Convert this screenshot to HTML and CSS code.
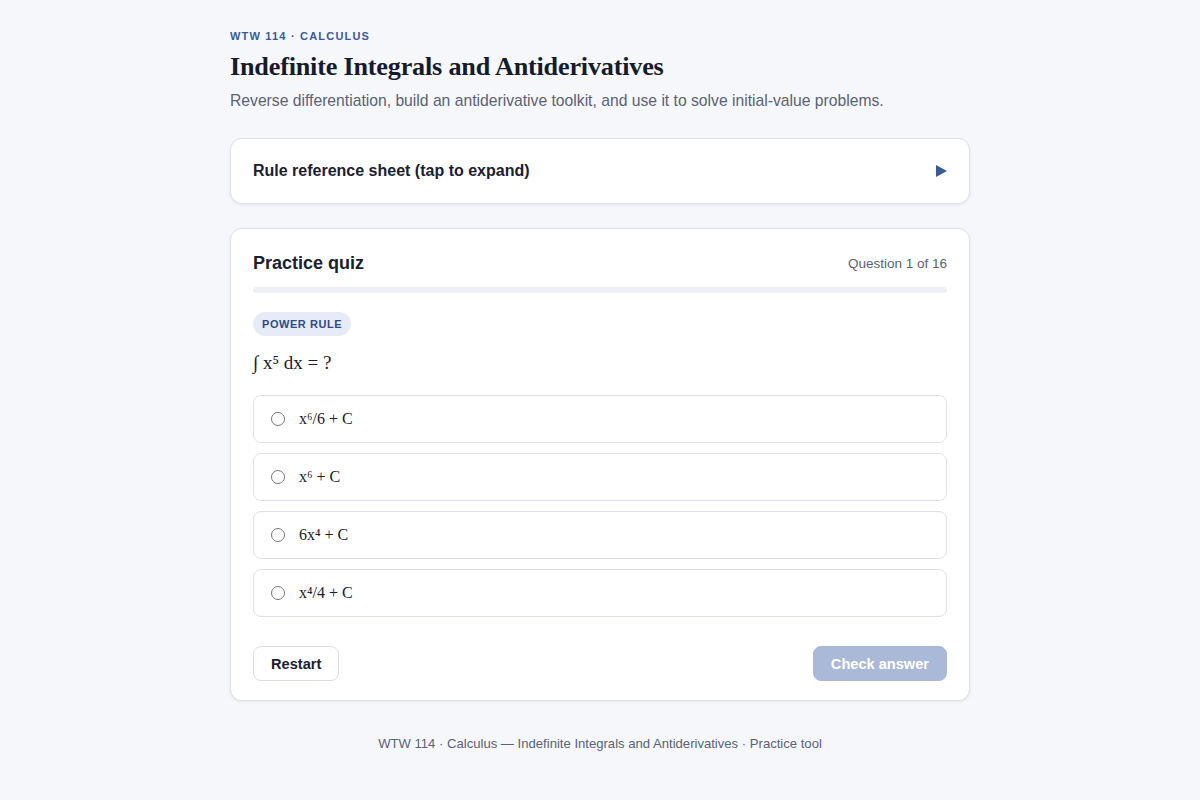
FILE: index.html
```html
<!DOCTYPE html>
<html lang="en">
<head>
<meta charset="utf-8">
<title>Indefinite Integrals and Antiderivatives</title>
<link rel="stylesheet" href="styles.css">
</head>
<body>
<main class="page">
  <div class="eyebrow">WTW 114 · Calculus</div>
  <h1 class="title">Indefinite Integrals and Antiderivatives</h1>
  <p class="subtitle">Reverse differentiation, build an antiderivative toolkit, and use it to solve initial-value problems.</p>

  <section class="card ref">
    <span class="ref-label">Rule reference sheet (tap to expand)</span>
    <span class="ref-arrow" aria-hidden="true"></span>
  </section>

  <section class="card quiz">
    <div class="quiz-head">
      <h2 class="quiz-title">Practice quiz</h2>
      <span class="quiz-count">Question 1 of 16</span>
    </div>
    <div class="progress"><div class="progress-fill" style="width:0%"></div></div>
    <span class="badge">Power rule</span>
    <p class="question">∫ x⁵ dx = ?</p>
    <div class="options">
      <label class="option"><span class="radio"></span><span class="opt-text">x⁶/6 + C</span></label>
      <label class="option"><span class="radio"></span><span class="opt-text">x⁶ + C</span></label>
      <label class="option"><span class="radio"></span><span class="opt-text">6x⁴ + C</span></label>
      <label class="option"><span class="radio"></span><span class="opt-text">x⁴/4 + C</span></label>
    </div>
    <div class="actions">
      <button class="btn btn-secondary">Restart</button>
      <button class="btn btn-primary" disabled>Check answer</button>
    </div>
  </section>

  <footer class="footer">WTW 114 · Calculus — Indefinite Integrals and Antiderivatives · Practice tool</footer>
</main>
</body>
</html>
```
FILE: styles.css
```css
* { box-sizing: border-box; }
html, body { margin: 0; padding: 0; }
body {
  background: #f6f7fb;
  font-family: "Liberation Sans", Arial, sans-serif;
  color: #1b2030;
}
.page {
  width: 740px;
  margin: 0 auto;
  padding-top: 28px;
}
.eyebrow {
  font-size: 11px;
  line-height: 16px;
  font-weight: 700;
  letter-spacing: 1.2px;
  text-transform: uppercase;
  color: #3a5a9e;
}
.title {
  margin: 6px 0 0;
  font-family: "Liberation Serif", "Times New Roman", serif;
  font-size: 26.2px;
  line-height: 34px;
  font-weight: 700;
  color: #161b2b;
  letter-spacing: -0.2px;
}
.subtitle {
  margin: 5px 0 0;
  font-size: 15.7px;
  line-height: 24px;
  color: #5a6275;
}
.card {
  background: #fff;
  border: 1px solid #dde1ea;
  border-radius: 12px;
  box-shadow: 0 1px 3px rgba(20, 30, 60, 0.08);
}
.ref {
  margin-top: 25px;
  padding: 21px 22px;
  display: flex;
  align-items: center;
  justify-content: space-between;
}
.ref-label {
  font-size: 16px;
  line-height: 22px;
  font-weight: 700;
  color: #1b2030;
}
.ref-arrow {
  width: 0;
  height: 0;
  border-left: 11px solid #3a5a9e;
  border-top: 6px solid transparent;
  border-bottom: 6px solid transparent;
}
.quiz {
  margin-top: 24px;
  padding: 22px 22px 19px;
  display: flex;
  flex-direction: column;
  align-items: flex-start;
}
.quiz-head {
  width: 100%;
  display: flex;
  justify-content: space-between;
  align-items: center;
  height: 24px;
}
.quiz-title {
  margin: 0;
  font-size: 18px;
  line-height: 24px;
  font-weight: 700;
  color: #1b2030;
}
.quiz-count {
  font-size: 13.5px;
  color: #5a6275;
}
.progress {
  width: 100%;
  height: 6px;
  margin-top: 12px;
  background: #eef0f5;
  border-radius: 3px;
  overflow: hidden;
}
.progress-fill {
  height: 100%;
  background: #3a5a9e;
}
.badge {
  margin-top: 19px;
  height: 24px;
  line-height: 24px;
  padding: 0 9px;
  border-radius: 12px;
  background: #e6ebf7;
  color: #2d4a8a;
  font-size: 11px;
  font-weight: 700;
  letter-spacing: 0.55px;
  text-transform: uppercase;
}
.question {
  margin: 14px 0 0;
  font-family: "Liberation Serif", "Times New Roman", serif;
  font-size: 19px;
  line-height: 26px;
  color: #1b2030;
}
.options {
  width: 100%;
  margin-top: 19px;
  display: flex;
  flex-direction: column;
  gap: 10px;
}
.option {
  height: 48px;
  display: flex;
  align-items: center;
  gap: 14px;
  padding: 0 17px;
  border: 1px solid #dde1ea;
  border-radius: 8px;
  background: #fff;
  cursor: pointer;
}
.radio {
  width: 14px;
  height: 14px;
  border-radius: 50%;
  border: 1px solid #767676;
  background: #fff;
  flex: none;
}
.opt-text {
  font-family: "Liberation Serif", "Times New Roman", serif;
  font-size: 16px;
  color: #1b2030;
}
.actions {
  width: 100%;
  margin-top: 29px;
  display: flex;
  justify-content: space-between;
}
.btn {
  height: 35px;
  padding: 0 17px;
  border-radius: 8px;
  font-family: "Liberation Sans", Arial, sans-serif;
  font-size: 14.6px;
  font-weight: 700;
}
.btn-secondary {
  background: #fff;
  border: 1px solid #d9dde6;
  color: #1b2030;
}
.btn-primary {
  background: #aab9d8;
  border: 1px solid #aab9d8;
  color: #fff;
}
.footer {
  margin-top: 34px;
  text-align: center;
  font-size: 13.1px;
  line-height: 18px;
  color: #5a6275;
}
```
